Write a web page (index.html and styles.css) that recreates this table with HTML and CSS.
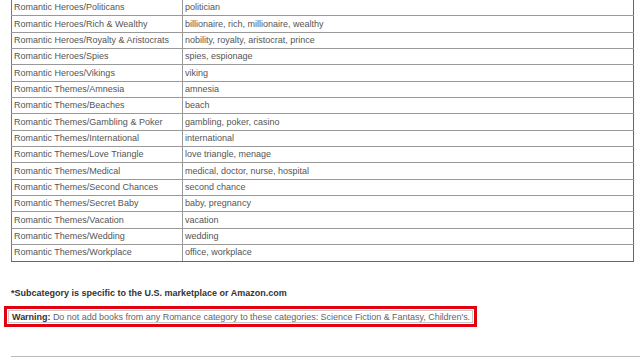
FILE: index.html
```html
<!DOCTYPE html>
<html>
<head>
<meta charset="utf-8">
<link rel="stylesheet" href="styles.css">
</head>
<body>
<div class="page">
  <table class="cats">
    <tbody>
      <tr><td class="c1">Romantic Heroes/Politicans</td><td>politician</td></tr>
      <tr><td class="c1">Romantic Heroes/Rich &amp; Wealthy</td><td>billionaire, rich, millionaire, wealthy</td></tr>
      <tr><td class="c1">Romantic Heroes/Royalty &amp; Aristocrats</td><td>nobility, royalty, aristocrat, prince</td></tr>
      <tr><td class="c1">Romantic Heroes/Spies</td><td>spies, espionage</td></tr>
      <tr><td class="c1">Romantic Heroes/Vikings</td><td>viking</td></tr>
      <tr><td class="c1">Romantic Themes/Amnesia</td><td>amnesia</td></tr>
      <tr><td class="c1">Romantic Themes/Beaches</td><td>beach</td></tr>
      <tr><td class="c1">Romantic Themes/Gambling &amp; Poker</td><td>gambling, poker, casino</td></tr>
      <tr><td class="c1">Romantic Themes/International</td><td>international</td></tr>
      <tr><td class="c1">Romantic Themes/Love Triangle</td><td>love triangle, menage</td></tr>
      <tr><td class="c1">Romantic Themes/Medical</td><td>medical, doctor, nurse, hospital</td></tr>
      <tr><td class="c1">Romantic Themes/Second Chances</td><td>second chance</td></tr>
      <tr><td class="c1">Romantic Themes/Secret Baby</td><td>baby, pregnancy</td></tr>
      <tr><td class="c1">Romantic Themes/Vacation</td><td>vacation</td></tr>
      <tr><td class="c1">Romantic Themes/Wedding</td><td>wedding</td></tr>
      <tr><td class="c1">Romantic Themes/Workplace</td><td>office, workplace</td></tr>
    </tbody>
  </table>
  <p class="note">*Subcategory is specific to the U.S. marketplace or Amazon.com</p>
  <div class="warning"><div class="warning-inner"><b>Warning:</b> Do not add books from any Romance category to these categories: Science Fiction &amp; Fantasy, Children's.</div></div>
  <div class="rule"></div>
</div>
</body>
</html>
```
FILE: styles.css
```css
html, body {
  margin: 0;
  padding: 0;
  background: #fff;
}
body {
  font-family: "Liberation Sans", Arial, sans-serif;
  font-size: 9px;
  color: #555;
  overflow: hidden;
}
.page {
  width: 640px;
  height: 359px;
  overflow: hidden;
}
.cats {
  border-collapse: collapse;
  margin: -1px 0 0 11px;
  width: 623px;
  border-right: 1px solid #666;
  border-bottom: 1px solid #666;
  border-left: 1px solid #777;
}
.cats tr {
  height: 16.35px;
}
.cats td {
  border: 1px solid #999;
  padding: 0 2px;
  line-height: 11px;
  color: #555;
  white-space: nowrap;
  vertical-align: middle;
}
.cats td.c1 {
  width: 166px;
}
.cats tr:last-child td {
  border-bottom: 1px solid #666;
}
.cats td:last-child {
  border-right: 1px solid #666;
}
.cats td:first-child {
  border-left: 1px solid #777;
}
.note {
  margin: 26px 0 0 11px;
  font-weight: bold;
  color: #333;
  line-height: 11px;
}
.warning {
  display: inline-block;
  margin: 7px 0 0 4px;
  border: 3px solid #e3000f;
  padding: 1px;
}
.warning-inner {
  border: 1px solid #c8c8c8;
  padding: 1px 2px 0 3px;
  line-height: 10px;
  color: #666;
  letter-spacing: -0.03px;
}
.warning-inner b {
  color: #333;
}
.rule {
  margin: 29px 0 0 11px;
  border-top: 1px solid #bbb;
}
```
